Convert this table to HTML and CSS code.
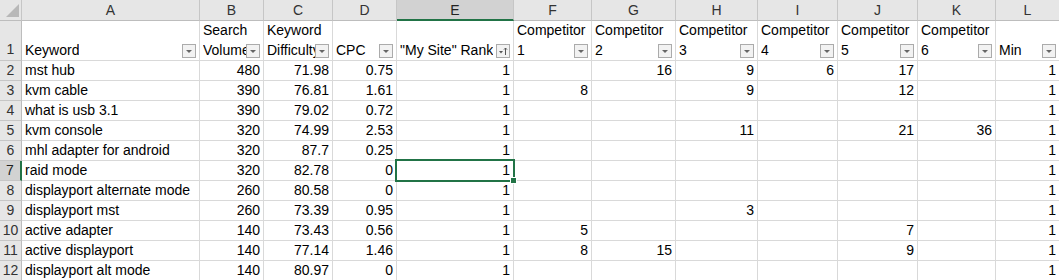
FILE: index.html
```html
<!DOCTYPE html>
<html>
<head>
<meta charset="utf-8">
<link rel="stylesheet" href="styles.css">
</head>
<body>
<div class="sheet">
  <div class="h corner"><span class="tri"></span></div>
  <div class="h">A</div><div class="h">B</div><div class="h">C</div><div class="h">D</div>
  <div class="h sel">E</div><div class="h">F</div><div class="h">G</div><div class="h">H</div>
  <div class="h">I</div><div class="h">J</div><div class="h">K</div><div class="h">L</div>

  <div class="r r1">1</div>
  <div class="c f"><span class="lbl">Keyword</span><span class="btn"><i class="dd"></i></span></div>
  <div class="c f"><span class="lbl">Search Volume</span><span class="btn"><i class="dd"></i></span></div>
  <div class="c f"><span class="lbl">Keyword Difficulty</span><span class="btn"><i class="dd"></i></span></div>
  <div class="c f"><span class="lbl">CPC</span><span class="btn"><i class="dd"></i></span></div>
  <div class="c f"><span class="lbl">"My Site" Rank</span><span class="btn"><svg width="12" height="12" viewBox="0 0 12 12"><path d="M2 6h4l-2 2.5z" fill="#555"/><path d="M8.5 3v7M7 4.6l1.5-1.6 1.5 1.6" stroke="#555" stroke-width="1" fill="none"/></svg></span></div>
  <div class="c f"><span class="lbl">Competitor 1</span><span class="btn"><i class="dd"></i></span></div>
  <div class="c f"><span class="lbl">Competitor 2</span><span class="btn"><i class="dd"></i></span></div>
  <div class="c f"><span class="lbl">Competitor 3</span><span class="btn"><i class="dd"></i></span></div>
  <div class="c f"><span class="lbl">Competitor 4</span><span class="btn"><i class="dd"></i></span></div>
  <div class="c f"><span class="lbl">Competitor 5</span><span class="btn"><i class="dd"></i></span></div>
  <div class="c f"><span class="lbl">Competitor 6</span><span class="btn"><i class="dd"></i></span></div>
  <div class="c f"><span class="lbl">Min</span><span class="btn"><i class="dd"></i></span></div>

  <div class="r">2</div><div class="c t">mst hub</div><div class="c n">480</div><div class="c n">71.98</div><div class="c n">0.75</div><div class="c n">1</div><div class="c n"></div><div class="c n">16</div><div class="c n">9</div><div class="c n">6</div><div class="c n">17</div><div class="c n"></div><div class="c n">1</div>
  <div class="r">3</div><div class="c t">kvm cable</div><div class="c n">390</div><div class="c n">76.81</div><div class="c n">1.61</div><div class="c n">1</div><div class="c n">8</div><div class="c n"></div><div class="c n">9</div><div class="c n"></div><div class="c n">12</div><div class="c n"></div><div class="c n">1</div>
  <div class="r">4</div><div class="c t">what is usb 3.1</div><div class="c n">390</div><div class="c n">79.02</div><div class="c n">0.72</div><div class="c n">1</div><div class="c n"></div><div class="c n"></div><div class="c n"></div><div class="c n"></div><div class="c n"></div><div class="c n"></div><div class="c n">1</div>
  <div class="r">5</div><div class="c t">kvm console</div><div class="c n">320</div><div class="c n">74.99</div><div class="c n">2.53</div><div class="c n">1</div><div class="c n"></div><div class="c n"></div><div class="c n">11</div><div class="c n"></div><div class="c n">21</div><div class="c n">36</div><div class="c n">1</div>
  <div class="r">6</div><div class="c t">mhl adapter for android</div><div class="c n">320</div><div class="c n">87.7</div><div class="c n">0.25</div><div class="c n">1</div><div class="c n"></div><div class="c n"></div><div class="c n"></div><div class="c n"></div><div class="c n"></div><div class="c n"></div><div class="c n">1</div>
  <div class="r rsel">7</div><div class="c t">raid mode</div><div class="c n">320</div><div class="c n">82.78</div><div class="c n">0</div><div class="c n active">1</div><div class="c n"></div><div class="c n"></div><div class="c n"></div><div class="c n"></div><div class="c n"></div><div class="c n"></div><div class="c n">1</div>
  <div class="r">8</div><div class="c t">displayport alternate mode</div><div class="c n">260</div><div class="c n">80.58</div><div class="c n">0</div><div class="c n">1</div><div class="c n"></div><div class="c n"></div><div class="c n"></div><div class="c n"></div><div class="c n"></div><div class="c n"></div><div class="c n">1</div>
  <div class="r">9</div><div class="c t">displayport mst</div><div class="c n">260</div><div class="c n">73.39</div><div class="c n">0.95</div><div class="c n">1</div><div class="c n"></div><div class="c n"></div><div class="c n">3</div><div class="c n"></div><div class="c n"></div><div class="c n"></div><div class="c n">1</div>
  <div class="r">10</div><div class="c t">active adapter</div><div class="c n">140</div><div class="c n">73.43</div><div class="c n">0.56</div><div class="c n">1</div><div class="c n">5</div><div class="c n"></div><div class="c n"></div><div class="c n"></div><div class="c n">7</div><div class="c n"></div><div class="c n">1</div>
  <div class="r">11</div><div class="c t">active displayport</div><div class="c n">140</div><div class="c n">77.14</div><div class="c n">1.46</div><div class="c n">1</div><div class="c n">8</div><div class="c n">15</div><div class="c n"></div><div class="c n"></div><div class="c n">9</div><div class="c n"></div><div class="c n">1</div>
  <div class="r">12</div><div class="c t">displayport alt mode</div><div class="c n">140</div><div class="c n">80.97</div><div class="c n">0</div><div class="c n">1</div><div class="c n"></div><div class="c n"></div><div class="c n"></div><div class="c n"></div><div class="c n"></div><div class="c n"></div><div class="c n">1</div>
</div>
</body>
</html>
```

FILE: styles.css
```css
html, body {
  margin: 0;
  padding: 0;
  background: #ffffff;
  overflow: hidden;
}
.sheet {
  display: grid;
  grid-template-columns: 22px 178px 64px 69px 64px 117px 78px 84px 82px 80px 80px 78px 64px;
  grid-template-rows: 21px 40px repeat(11, 20px);
  width: 1060px;
  font-family: "Liberation Sans", Arial, sans-serif;
  font-size: 14px;
  color: #000;
}
.sheet > div {
  box-sizing: border-box;
  overflow: hidden;
  white-space: nowrap;
}
.h {
  background: #e6e6e6;
  border-right: 1px solid #c6c6c6;
  border-bottom: 1px solid #bdbdbd;
  color: #333;
  text-align: center;
  line-height: 20px;
}
.h.sel {
  background: #d2d2d2;
  border-bottom: 2px solid #217346;
  color: #222;
}
.corner {
  position: relative;
}
.tri {
  position: absolute;
  right: 2px;
  bottom: 3px;
  width: 0;
  height: 0;
  border-left: 13px solid transparent;
  border-bottom: 13px solid #b8b8b8;
}
.r {
  background: #e6e6e6;
  border-right: 1px solid #bdbdbd;
  border-bottom: 1px solid #c6c6c6;
  color: #333;
  text-align: center;
  line-height: 19px;
  font-size: 14px;
}
.r.r1 {
  display: flex;
  align-items: flex-end;
  justify-content: center;
  padding-bottom: 1px;
}
.r.rsel {
  background: #d2d2d2;
  border-right: 2px solid #217346;
  color: #222;
}
.c {
  border-right: 1px solid #d9d9d9;
  border-bottom: 1px solid #d9d9d9;
  line-height: 19px;
}
.t {
  padding-left: 3px;
}
.n {
  text-align: right;
  padding-right: 3px;
}
.f {
  position: relative;
  display: flex;
  align-items: flex-end;
  padding-left: 3px;
  padding-bottom: 0;
}
.f .lbl {
  white-space: normal;
  line-height: 20px;
  overflow: hidden;
  max-height: 40px;
}
.btn {
  position: absolute;
  right: 3px;
  bottom: 2px;
  width: 14px;
  height: 14px;
  box-sizing: border-box;
  border: 1px solid #ababab;
  background: #f2f2f2;
  display: flex;
  align-items: center;
  justify-content: center;
}
.dd {
  width: 0;
  height: 0;
  border-left: 3px solid transparent;
  border-right: 3px solid transparent;
  border-top: 3px solid #666;
}
.active {
  position: relative;
  overflow: visible !important;
}
.active::after {
  content: "";
  position: absolute;
  left: -2px;
  top: -2px;
  right: -2px;
  bottom: -2px;
  border: 2px solid #217346;
  pointer-events: none;
}
.active::before {
  content: "";
  position: absolute;
  right: -4px;
  bottom: -4px;
  width: 5px;
  height: 5px;
  background: #217346;
  border: 1px solid #fff;
  z-index: 2;
}
```
